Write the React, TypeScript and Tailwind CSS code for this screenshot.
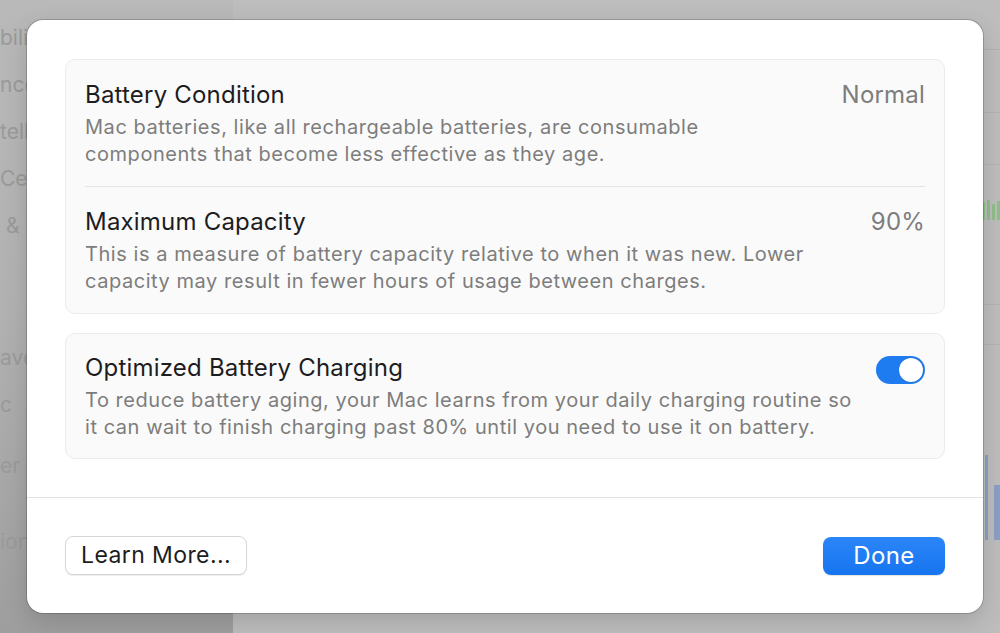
import React from 'react';

const sidebarItems = [
  { t: 'bility', mt: 'mt-[14px]' },
  { t: 'nce', mt: '' },
  { t: 'telligence', mt: '' },
  { t: 'Center', mt: '' },
  { t: ' & Dock', mt: '' },
  { t: 'aver', mt: 'mt-[85px]' },
  { t: 'c', mt: '' },
  { t: 'er', mt: 'mt-[14px]' },
  { t: 'ion', mt: 'mt-[29px]' },
];

const Background: React.FC = () => (
  <div className="flex h-full w-full">
    <aside className="flex h-full w-[233px] flex-col bg-gradient-to-b from-[#b9b9b9] via-[#b1b1b1] to-[#9e9e9e] text-[21px] text-[#9a9a9a]">
      {sidebarItems.map((it, i) => (
        <div key={i} className={`h-[47px] whitespace-pre leading-[47px] ${it.mt}`}>{it.t}</div>
      ))}
    </aside>
    <main className="flex flex-1 flex-col bg-[#bdbdbd]">
      <div className="h-[50px] border-b border-[#b0b0b0]" />
      <div className="h-[63px] border-b border-[#b3b3b3]" />
      <div className="h-[52px] border-b border-[#b3b3b3]" />
      <div className="flex h-[140px] justify-end border-b border-[#b3b3b3] pt-[35px]">
        <div className="flex h-[20px] items-end gap-[2px]">
          <span className="h-[18px] w-[3px] bg-[#8fbf8a]" />
          <span className="h-[20px] w-[3px] bg-[#8fbf8a]" />
          <span className="h-[16px] w-[3px] bg-[#8fbf8a]" />
          <span className="h-[19px] w-[3px] bg-[#8fbf8a]" />
        </div>
      </div>
      <div className="h-[40px] border-b border-[#b3b3b3]" />
      <div className="flex h-[190px] justify-end gap-[6px] pt-[110px]">
        <span className="h-[85px] w-[3px] bg-[#8b9ec4]" />
        <span className="mt-[30px] h-[55px] w-[6px] bg-[#8b9ec4]" />
      </div>
    </main>
  </div>
);

const Toggle: React.FC = () => (
  <div className="flex h-[28px] w-[49px] items-center justify-end rounded-full bg-[#1f7cf0] pr-[2px]">
    <div className="h-[24px] w-[24px] rounded-full bg-white shadow-[0_0_1px_rgba(0,0,0,0.4)]" />
  </div>
);

const Row: React.FC<{ title: string; value?: string; desc: React.ReactNode; right?: React.ReactNode }> = ({ title, value, desc, right }) => (
  <div className="flex items-start justify-between">
    <div>
      <div className="text-[24px] leading-[30px] tracking-[0.2px] text-[#1d1d1f]">{title}</div>
      <div className="mt-[4px] text-[20px] leading-[27px] tracking-[0.55px] text-[#7d7d7d]">{desc}</div>
    </div>
    {value && <div className="text-[24px] leading-[30px] tracking-[0.2px] text-[#7d7d7d]">{value}</div>}
    {right}
  </div>
);

const App: React.FC = () => {
  return (
    <div className="relative h-[633px] w-[1000px] overflow-hidden" style={{ fontFamily: 'Inter, "Noto Sans", sans-serif' }}>
      <Background />
      <div className="absolute left-[27px] top-[20px] flex h-[593px] w-[956px] flex-col rounded-[16px] bg-white shadow-[0_0_0_1px_rgba(0,0,0,0.18),0_8px_24px_rgba(0,0,0,0.15)]">
        <div className="flex flex-col gap-[19px] px-[38px] pt-[39px]">
          <section className="rounded-[10px] border border-[#ebebeb] bg-[#fafafa] px-[19px]">
            <div className="pt-[20px] pb-[18px]">
              <Row
                title="Battery Condition"
                value="Normal"
                desc={<>Mac batteries, like all rechargeable batteries, are consumable<br />components that become less effective as they age.</>}
              />
            </div>
            <div className="h-px bg-[#e4e4e4]" />
            <div className="pt-[20px] pb-[18px]">
              <Row
                title="Maximum Capacity"
                value="90%"
                desc={<>This is a measure of battery capacity relative to when it was new. Lower<br />capacity may result in fewer hours of usage between charges.</>}
              />
            </div>
          </section>
          <section className="rounded-[10px] border border-[#ebebeb] bg-[#fafafa] px-[19px] pt-[19px] pb-[17px]">
            <Row
              title="Optimized Battery Charging"
              desc={<>To reduce battery aging, your Mac learns from your daily charging routine so<br />it can wait to finish charging past 80% until you need to use it on battery.</>}
              right={<div className="pt-[3px]"><Toggle /></div>}
            />
          </section>
        </div>
        <div className="mt-auto h-px bg-[#e2e2e2]" />
        <div className="flex h-[115px] items-center justify-between px-[38px]">
          <button className="h-[39px] w-[182px] rounded-[8px] border border-[#d6d6d6] bg-white text-[23px] tracking-[0.4px] text-[#1d1d1f] shadow-[0_1px_1px_rgba(0,0,0,0.08)]">
            Learn More...
          </button>
          <button className="h-[38px] w-[122px] rounded-[8px] bg-gradient-to-b from-[#2a86f7] to-[#1674ef] text-[24px] tracking-[0.4px] text-white shadow-[0_1px_1px_rgba(0,0,0,0.12)]">
            Done
          </button>
        </div>
      </div>
    </div>
  );
};

export default App;
